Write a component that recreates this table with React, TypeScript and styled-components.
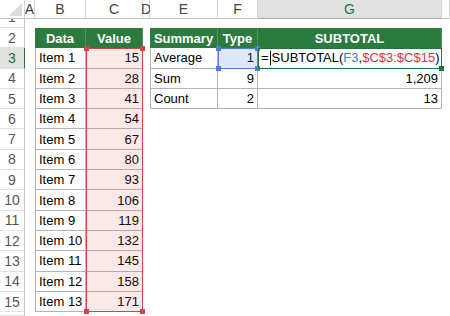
import styled, { createGlobalStyle } from 'styled-components';

const GlobalStyle = createGlobalStyle`
  html, body {
    margin: 0;
    padding: 0;
    background: #fff;
  }
`;

// grid columns: 1 = row headers, 2..8 = A..G, 9 = rest
const LETTERS = ['A', 'B', 'C', 'D', 'E', 'F', 'G', ''];

const items = Array.from({ length: 13 }, (_, i) => ({
  name: `Item ${i + 1}`,
  value: 15 + i * 13,
}));

const summary = [
  { label: 'Average', type: 1, result: '' },
  { label: 'Sum', type: 9, result: '1,209' },
  { label: 'Count', type: 2, result: '13' },
];

const GREEN = '#217346';

const App = () => {
  return (
    <>
      <GlobalStyle />
      <Sheet>
        <Corner />
        {LETTERS.map((letter, i) => (
          <ColHeader key={i} $col={i + 2} $active={letter === 'G'}>
            {letter}
          </ColHeader>
        ))}
        {Array.from({ length: 16 }, (_, i) => (
          <RowHeader key={i} $row={i + 1} $short={i === 0} $active={i === 2}>
            {i < 15 ? i + 1 : ''}
          </RowHeader>
        ))}

        <HeadCell $col={3} $row={2}>Data</HeadCell>
        <HeadCell $col={4} $row={2}>Value</HeadCell>
        {items.map((item, i) => (
          <Row key={item.name}>
            <DataCell $col={3} $row={i + 3} $left>
              {item.name}
            </DataCell>
            <DataCell $col={4} $row={i + 3} $right>
              {item.value}
            </DataCell>
          </Row>
        ))}

        <HeadCell $col={6} $row={2}>Summary</HeadCell>
        <HeadCell $col={7} $row={2}>Type</HeadCell>
        <HeadCell $col={8} $row={2}>SUBTOTAL</HeadCell>
        {summary.map((s, i) => (
          <Row key={s.label}>
            <DataCell $col={6} $row={i + 3} $left>
              {s.label}
            </DataCell>
            <DataCell $col={7} $row={i + 3} $right>
              {s.type}
            </DataCell>
            <DataCell $col={8} $row={i + 3} $right={i > 0}>
              {i === 0 ? (
                <Formula>
                  =<Caret />SUBTOTAL(<Ref $tone="#3b78d8">F3</Ref>,
                  <Ref $tone="#d23a3a">$C$3:$C$15</Ref>)
                </Formula>
              ) : (
                s.result
              )}
            </DataCell>
          </Row>
        ))}

        <Range $col={4} $from={3} $to={15} $tone="#d04545" $fill="rgba(220, 70, 70, 0.12)">
          <Handle $tone="#d04545" $v="top" $h="left" />
          <Handle $tone="#d04545" $v="top" $h="right" />
          <Handle $tone="#d04545" $v="bottom" $h="left" />
          <Handle $tone="#d04545" $v="bottom" $h="right" />
        </Range>
        <Range $col={7} $from={3} $to={3} $tone="#4a7fd6" $fill="rgba(80, 130, 215, 0.18)">
          <Handle $tone="#4a7fd6" $v="top" $h="left" />
          <Handle $tone="#4a7fd6" $v="top" $h="right" />
          <Handle $tone="#4a7fd6" $v="bottom" $h="left" />
          <Handle $tone="#4a7fd6" $v="bottom" $h="right" />
        </Range>
        <Range $col={8} $from={3} $to={3} $tone={GREEN} $fill="transparent">
          <Handle $tone={GREEN} $v="bottom" $h="right" />
        </Range>
      </Sheet>
    </>
  );
};

export default App;

const Sheet = styled.div`
  display: grid;
  grid-template-columns: 25px 10px 51px 57px 7px 68px 40px 184px 1fr;
  grid-template-rows: 19px 9px repeat(14, 20.3px) 1fr;
  width: 450px;
  height: 316px;
  overflow: hidden;
  background: #fff;
  font-family: 'Liberation Sans', Arial, sans-serif;
  font-size: 13px;
  color: #000;
`;

const Row = styled.div`
  display: contents;
`;

const Corner = styled.div`
  grid-column: 1;
  grid-row: 1;
  position: relative;
  box-sizing: border-box;
  border-right: 1px solid #d4d4d4;
  border-bottom: 1px solid #c6c6c6;

  &::after {
    content: '';
    position: absolute;
    right: 2px;
    bottom: 2px;
    border-style: solid;
    border-width: 0 0 13px 13px;
    border-color: transparent transparent #dcdcdc transparent;
  }
`;

const ColHeader = styled.div<{ $col: number; $active?: boolean }>`
  grid-column: ${(p) => p.$col};
  grid-row: 1;
  display: flex;
  align-items: center;
  justify-content: center;
  box-sizing: border-box;
  background: ${(p) => (p.$active ? '#e1e1e1' : '#fff')};
  color: ${(p) => (p.$active ? GREEN : '#444')};
  border-right: 1px solid #d4d4d4;
  border-bottom: 1px solid ${(p) => (p.$active ? '#a9a9a9' : '#c6c6c6')};
  font-size: 14px;
`;

const RowHeader = styled.div<{ $row: number; $short?: boolean; $active?: boolean }>`
  grid-column: 1;
  grid-row: ${(p) => p.$row + 1};
  display: flex;
  align-items: ${(p) => (p.$short ? 'flex-end' : 'center')};
  justify-content: center;
  box-sizing: border-box;
  overflow: hidden;
  line-height: 20px;
  background: ${(p) => (p.$active ? '#e1e1e1' : '#fff')};
  color: ${(p) => (p.$active ? GREEN : '#555')};
  border-right: 1px solid ${(p) => (p.$active ? GREEN : '#c6c6c6')};
  border-bottom: 1px solid #e1e1e1;
  font-size: 14px;
`;

const HeadCell = styled.div<{ $col: number; $row: number }>`
  grid-column: ${(p) => p.$col};
  grid-row: ${(p) => p.$row + 1};
  display: flex;
  align-items: center;
  justify-content: center;
  box-sizing: border-box;
  background: #2b7b3f;
  color: #fff;
  font-weight: bold;
  border-right: 1px solid #4f9464;
  border-top: 1px solid #2b7b3f;
`;

const DataCell = styled.div<{ $col: number; $row: number; $left?: boolean; $right?: boolean }>`
  grid-column: ${(p) => p.$col};
  grid-row: ${(p) => p.$row + 1};
  display: flex;
  align-items: center;
  justify-content: ${(p) => (p.$right ? 'flex-end' : 'flex-start')};
  box-sizing: border-box;
  padding: 0 3px 0 3px;
  white-space: nowrap;
  border-right: 1px solid #b4b4b4;
  border-bottom: 1px solid #b4b4b4;
  border-left: ${(p) => (p.$left ? '1px solid #b4b4b4' : 'none')};
`;

const Formula = styled.span`
  display: flex;
  align-items: center;
  white-space: pre;
`;

const Caret = styled.span`
  display: inline-block;
  width: 1px;
  height: 14px;
  margin: 0 1px;
  background: #000;
`;

const Ref = styled.span<{ $tone: string }>`
  color: ${(p) => p.$tone};
`;

const Range = styled.div<{ $col: number; $from: number; $to: number; $tone: string; $fill: string }>`
  grid-column: ${(p) => p.$col};
  grid-row: ${(p) => `${p.$from + 1} / ${p.$to + 2}`};
  position: relative;
  box-sizing: border-box;
  border: 1px solid ${(p) => p.$tone};
  background: ${(p) => p.$fill};
  pointer-events: none;
`;

const Handle = styled.span<{ $tone: string; $v: 'top' | 'bottom'; $h: 'left' | 'right' }>`
  position: absolute;
  width: 5px;
  height: 5px;
  background: ${(p) => p.$tone};
  ${(p) => p.$v}: -3px;
  ${(p) => p.$h}: -3px;
`;
